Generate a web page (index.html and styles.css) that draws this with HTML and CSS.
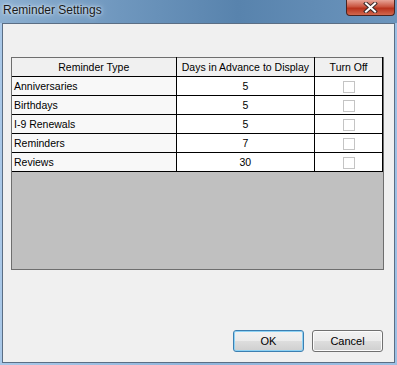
FILE: index.html
```html
<!DOCTYPE html>
<html lang="en">
<head>
    <meta charset="UTF-8">
    <title>Reminder Settings</title>
    <link rel="stylesheet" href="styles.css">
</head>
<body>
    <div class="window">
        <div class="titlebar">
            <span class="title">Reminder Settings</span>
            <button class="close" title="Close">
                <svg width="15" height="11" viewBox="0 0 15 11">
                    <path d="M3 1.5 L12 9.5 M12 1.5 L3 9.5" stroke="#3b2b2b" stroke-width="4" stroke-linecap="square"/>
                    <path d="M3 1.5 L12 9.5 M12 1.5 L3 9.5" stroke="#ffffff" stroke-width="2" stroke-linecap="square"/>
                </svg>
            </button>
        </div>

        <div class="client">
            <div class="grid">
                <table class="reminders">
                    <thead>
                        <tr>
                            <th class="col-type">Reminder Type</th>
                            <th class="col-days">Days in Advance to Display</th>
                            <th class="col-off">Turn Off</th>
                        </tr>
                    </thead>
                    <tbody>
                        <tr><td class="name">Anniversaries</td><td class="days">5</td><td class="off"><span class="check"></span></td></tr>
                        <tr><td class="name">Birthdays</td><td class="days">5</td><td class="off"><span class="check"></span></td></tr>
                        <tr><td class="name">I-9 Renewals</td><td class="days">5</td><td class="off"><span class="check"></span></td></tr>
                        <tr><td class="name">Reminders</td><td class="days">7</td><td class="off"><span class="check"></span></td></tr>
                        <tr><td class="name">Reviews</td><td class="days">30</td><td class="off"><span class="check"></span></td></tr>
                    </tbody>
                </table>
            </div>

            <div class="actions">
                <button class="btn default">OK</button>
                <button class="btn">Cancel</button>
            </div>
        </div>
    </div>
</body>
</html>
```

FILE: styles.css
```css
body {
    margin: 0;
    padding: 0;
    font-family: "Liberation Sans", Arial, sans-serif;
}
.window {
    width: 397px;
    height: 365px;
    display: flex;
    flex-direction: column;
    background: linear-gradient(to right, #a9c8e8, #8fb4da 50%, #9cc0e4);
    box-sizing: border-box;
}
.titlebar {
    height: 23px;
    display: flex;
    justify-content: space-between;
    align-items: flex-start;
    background: linear-gradient(to right, #8cafd0 0%, #6f97be 30%, #5883ad 60%, #6c95bd 100%);
}
.title {
    margin: 3px 0 0 3px;
    font-size: 12px;
    color: #1a1a1a;
    text-shadow: 0 0 6px #d6e6f4, 0 0 3px #e6f0fa;
}
.close {
    width: 49px;
    height: 16px;
    margin-right: 2px;
    padding: 0;
    border: 1px solid #4a2420;
    border-top: none;
    border-radius: 0 0 4px 4px;
    background: linear-gradient(#e8a497, #c9543f 45%, #b8321c 55%, #d2684e);
    display: flex;
    align-items: center;
    justify-content: center;
}
.client {
    flex: 1;
    margin: 0 2px 2px 2px;
    border: 1px solid #5b6e84;
    background-color: #f0f0f0;
    padding: 33px 10px 0 8px;
    display: flex;
    flex-direction: column;
}
.grid {
    height: 213px;
    box-sizing: border-box;
    border: 1px solid #6e6e6e;
    border-top: none;
    background-color: #c0c0c0;
}
.reminders {
    border-collapse: collapse;
    font-size: 10.5px;
    color: #000;
}
.reminders th {
    height: 18px;
    padding: 0;
    font-weight: normal;
    background-color: #f0f0f0;
    border: 1px solid #000;
    border-top: 1px solid #6e6e6e;
    border-left: none;
}
.reminders td {
    height: 18px;
    padding: 0;
    border-right: 1px solid #000;
    border-bottom: 1px solid #000;
    background-color: #fff;
}
.col-type { width: 164px; }
.col-days { width: 138px; }
.col-off { width: 67px; }
.reminders td.name {
    background-color: #f8f8f8;
    padding-left: 2px;
    text-align: left;
}
.reminders td.days,
.reminders td.off {
    text-align: center;
}
.check {
    display: inline-block;
    width: 10px;
    height: 10px;
    border: 1px solid #c4c4c4;
    background-color: #fff;
    vertical-align: middle;
}
.actions {
    margin-top: 60px;
    display: flex;
    justify-content: flex-end;
    gap: 8px;
    padding-right: 1px;
}
.btn {
    width: 71px;
    height: 22px;
    padding: 0;
    font-family: "Liberation Sans", Arial, sans-serif;
    font-size: 11px;
    color: #000;
    border: 1px solid #707070;
    border-radius: 3px;
    background: linear-gradient(#f2f2f2 0%, #ebebeb 50%, #dddddd 51%, #cfcfcf 100%);
    box-shadow: inset 0 0 0 1px #fcfcfc;
}
.btn.default {
    border-color: #3c7fb1;
    box-shadow: inset 0 0 0 1px #8ed2f4;
}
```
